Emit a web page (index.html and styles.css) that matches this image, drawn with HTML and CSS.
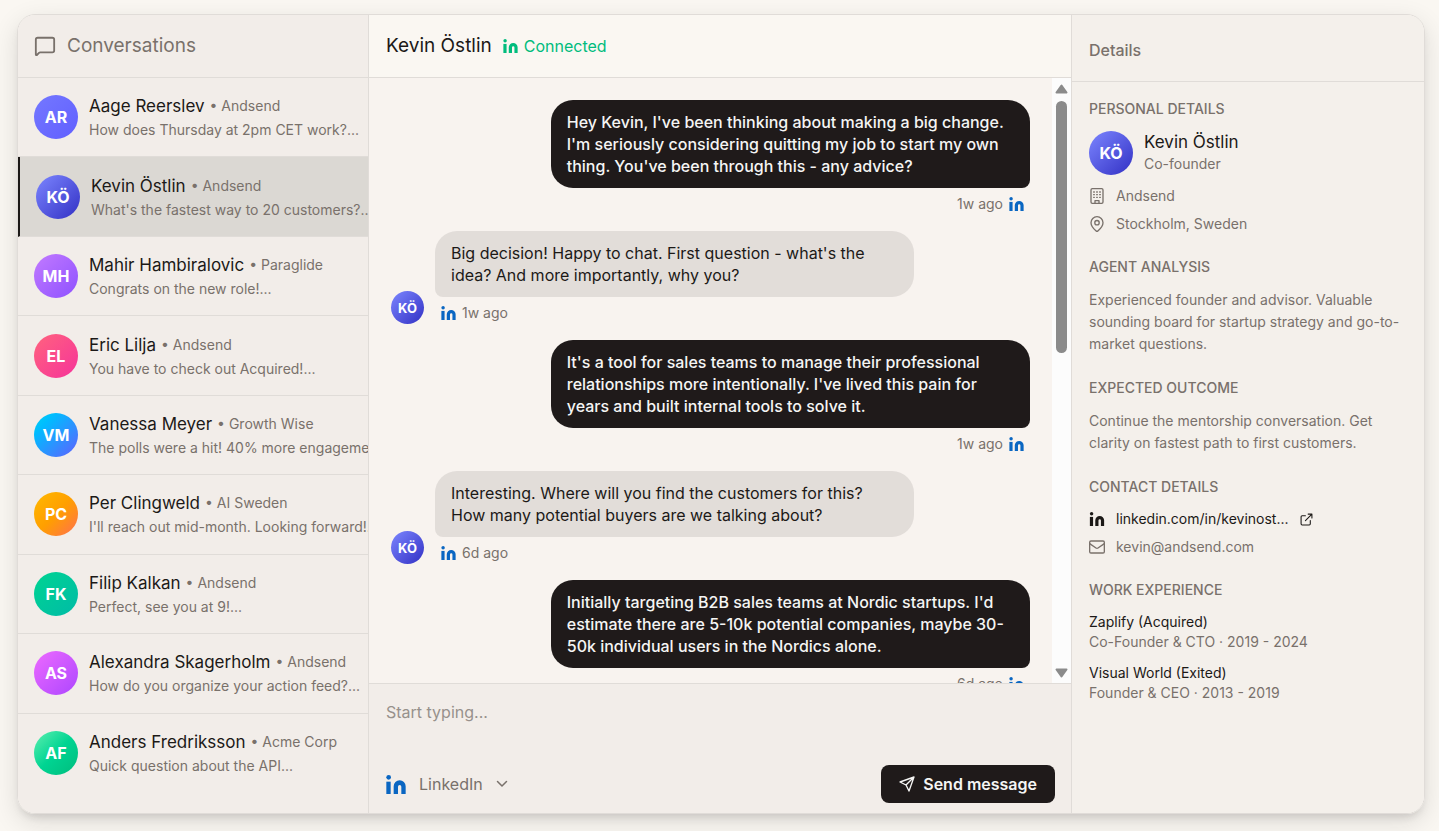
FILE: index.html
```html
<!DOCTYPE html>
<html lang="en">
<head>
    <meta charset="UTF-8">
    <meta name="viewport" content="width=device-width, initial-scale=1.0">
    <title>Conversations</title>
    <link rel="stylesheet" href="styles.css">
</head>
<body>
    <!-- Shared icons -->
    <svg class="sprite" aria-hidden="true">
        <symbol id="icon-linkedin" viewBox="0 0 60 57">
            <circle cx="8" cy="7" r="7"/>
            <rect x="1" y="20" width="13" height="37"/>
            <path d="M23 57V34a18 18 0 0 1 36 0v23H46V35a5 5 0 0 0-10 0v22z"/>
        </symbol>
    </svg>

    <div class="app">
        <nav class="sidebar" aria-label="Conversations">
            <header class="sidebar-header">
                <svg class="icon-chat" viewBox="0 0 24 24" aria-hidden="true"><path d="M22 17a2 2 0 0 1-2 2H6.8a2 2 0 0 0-1.4.6l-2.2 2.2A.7.7 0 0 1 2 21.3V5a2 2 0 0 1 2-2h16a2 2 0 0 1 2 2z"/></svg>
                <h2>Conversations</h2>
            </header>
            <div class="list">
                <a class="row" href="#aage">
                    <span class="avatar ar">AR</span>
                    <span class="row-text">
                        <span class="row-top"><span class="name">Aage Reerslev</span><span class="company">• Andsend</span></span>
                        <span class="preview">How does Thursday at 2pm CET work?...</span>
                    </span>
                </a>
                <a class="row active" href="#kevin">
                    <span class="avatar ko">KÖ</span>
                    <span class="row-text">
                        <span class="row-top"><span class="name">Kevin Östlin</span><span class="company">• Andsend</span></span>
                        <span class="preview">What's the fastest way to 20 customers?...</span>
                    </span>
                </a>
                <a class="row" href="#mahir">
                    <span class="avatar mh">MH</span>
                    <span class="row-text">
                        <span class="row-top"><span class="name">Mahir Hambiralovic</span><span class="company">• Paraglide</span></span>
                        <span class="preview">Congrats on the new role!...</span>
                    </span>
                </a>
                <a class="row" href="#eric">
                    <span class="avatar el">EL</span>
                    <span class="row-text">
                        <span class="row-top"><span class="name">Eric Lilja</span><span class="company">• Andsend</span></span>
                        <span class="preview">You have to check out Acquired!...</span>
                    </span>
                </a>
                <a class="row" href="#vanessa">
                    <span class="avatar vm">VM</span>
                    <span class="row-text">
                        <span class="row-top"><span class="name">Vanessa Meyer</span><span class="company">• Growth Wise</span></span>
                        <span class="preview">The polls were a hit! 40% more engagement...</span>
                    </span>
                </a>
                <a class="row" href="#per">
                    <span class="avatar pc">PC</span>
                    <span class="row-text">
                        <span class="row-top"><span class="name">Per Clingweld</span><span class="company">• AI Sweden</span></span>
                        <span class="preview">I'll reach out mid-month. Looking forward!...</span>
                    </span>
                </a>
                <a class="row" href="#filip">
                    <span class="avatar fk">FK</span>
                    <span class="row-text">
                        <span class="row-top"><span class="name">Filip Kalkan</span><span class="company">• Andsend</span></span>
                        <span class="preview">Perfect, see you at 9!...</span>
                    </span>
                </a>
                <a class="row" href="#alexandra">
                    <span class="avatar as">AS</span>
                    <span class="row-text">
                        <span class="row-top"><span class="name">Alexandra Skagerholm</span><span class="company">• Andsend</span></span>
                        <span class="preview">How do you organize your action feed?...</span>
                    </span>
                </a>
                <a class="row" href="#anders">
                    <span class="avatar af">AF</span>
                    <span class="row-text">
                        <span class="row-top"><span class="name">Anders Fredriksson</span><span class="company">• Acme Corp</span></span>
                        <span class="preview">Quick question about the API...</span>
                    </span>
                </a>
            </div>
        </nav>

        <main class="chat">
            <header class="chat-header">
                <h1>Kevin Östlin</h1>
                <span class="connected"><svg class="in-small" aria-hidden="true"><use href="#icon-linkedin"/></svg>Connected</span>
            </header>

            <div class="thread">
                <div class="messages">
                    <div class="message sent">
                        <div class="message-body">
                            <p class="bubble">Hey Kevin, I've been thinking about making a big change. I'm seriously considering quitting my job to start my own thing. You've been through this - any advice?</p>
                            <div class="meta">1w ago <svg class="in-small" aria-hidden="true"><use href="#icon-linkedin"/></svg></div>
                        </div>
                    </div>
                    <div class="message received">
                        <span class="avatar avatar-small ko">KÖ</span>
                        <div class="message-body">
                            <p class="bubble">Big decision! Happy to chat. First question - what's the idea? And more importantly, why you?</p>
                            <div class="meta"><svg class="in-small" aria-hidden="true"><use href="#icon-linkedin"/></svg> 1w ago</div>
                        </div>
                    </div>
                    <div class="message sent">
                        <div class="message-body">
                            <p class="bubble">It's a tool for sales teams to manage their professional relationships more intentionally. I've lived this pain for years and built internal tools to solve it.</p>
                            <div class="meta">1w ago <svg class="in-small" aria-hidden="true"><use href="#icon-linkedin"/></svg></div>
                        </div>
                    </div>
                    <div class="message received">
                        <span class="avatar avatar-small ko">KÖ</span>
                        <div class="message-body">
                            <p class="bubble">Interesting. Where will you find the customers for this? How many potential buyers are we talking about?</p>
                            <div class="meta"><svg class="in-small" aria-hidden="true"><use href="#icon-linkedin"/></svg> 6d ago</div>
                        </div>
                    </div>
                    <div class="message sent">
                        <div class="message-body">
                            <p class="bubble">Initially targeting B2B sales teams at Nordic startups. I'd estimate there are 5-10k potential companies, maybe 30-50k individual users in the Nordics alone.</p>
                            <div class="meta">6d ago <svg class="in-small" aria-hidden="true"><use href="#icon-linkedin"/></svg></div>
                        </div>
                    </div>
                </div>
                <div class="scrollbar" aria-hidden="true">
                    <svg class="arrow" viewBox="0 0 13 10"><path d="M6.5 1.5l5 7h-10z"/></svg>
                    <div class="track"><div class="thumb"></div></div>
                    <svg class="arrow" viewBox="0 0 13 10"><path d="M6.5 8.5l-5-7h10z"/></svg>
                </div>
            </div>

            <form class="composer">
                <textarea aria-label="Message" placeholder="Start typing..."></textarea>
                <div class="composer-bar">
                    <label class="channel">
                        <svg class="in-large" aria-hidden="true"><use href="#icon-linkedin"/></svg>
                        <select aria-label="Channel">
                            <option>LinkedIn</option>
                        </select>
                        <svg class="icon-chevron" viewBox="0 0 24 24" aria-hidden="true"><path d="m3 7 9 9 9-9"/></svg>
                    </label>
                    <button class="send" type="button">
                        <svg class="icon-send" viewBox="0 0 24 24" aria-hidden="true"><path d="M22.5 1.5L15 22.5l-4.5-9L1.5 9zM22.5 1.5l-12 12"/></svg>
                        Send message
                    </button>
                </div>
            </form>
        </main>

        <aside class="details">
            <header class="details-header">
                <h2>Details</h2>
            </header>
            <div class="details-body">
                <section>
                    <h3>PERSONAL DETAILS</h3>
                    <div class="person">
                        <span class="avatar ko">KÖ</span>
                        <div>
                            <div class="name">Kevin Östlin</div>
                            <div class="role">Co-founder</div>
                        </div>
                    </div>
                    <ul class="facts">
                        <li>
                            <svg class="icon-fact" viewBox="0 0 24 24" aria-hidden="true"><rect x="3" y="1" width="18" height="22" rx="2"/><path d="M9 23v-4h6v4M7 6h1M11.5 6h1M16 6h1M7 10h1M11.5 10h1M16 10h1M7 14h1M11.5 14h1M16 14h1"/></svg>
                            Andsend
                        </li>
                        <li>
                            <svg class="icon-fact" viewBox="0 0 24 24" aria-hidden="true"><path d="M21 10c0 5-5 10-7.7 12.4a2 2 0 0 1-2.6 0C8 20 3 15 3 10a9 9 0 0 1 18 0z"/><circle cx="12" cy="10" r="3.3"/></svg>
                            Stockholm, Sweden
                        </li>
                    </ul>
                </section>
                <section>
                    <h3>AGENT ANALYSIS</h3>
                    <p>Experienced founder and advisor. Valuable sounding board for startup strategy and go-to-market questions.</p>
                </section>
                <section>
                    <h3>EXPECTED OUTCOME</h3>
                    <p>Continue the mentorship conversation. Get clarity on fastest path to first customers.</p>
                </section>
                <section>
                    <h3>CONTACT DETAILS</h3>
                    <ul class="facts">
                        <li>
                            <a class="profile-link" href="#linkedin">
                                <svg class="in-fact" aria-hidden="true"><use href="#icon-linkedin"/></svg>
                                linkedin.com/in/kevinost...
                                <svg class="icon-external" viewBox="0 0 24 24" aria-hidden="true"><path d="M15 2h7v7M10 14 22 2M19 14v6a2 2 0 0 1-2 2H4a2 2 0 0 1-2-2V7a2 2 0 0 1 2-2h6"/></svg>
                            </a>
                        </li>
                        <li>
                            <svg class="icon-fact" viewBox="0 0 24 24" aria-hidden="true"><rect x="1" y="3" width="22" height="18" rx="2"/><path d="m1 7 9.5 6.5a2.7 2.7 0 0 0 3 0L23 7"/></svg>
                            kevin@andsend.com
                        </li>
                    </ul>
                </section>
                <section>
                    <h3>WORK EXPERIENCE</h3>
                    <div class="jobs">
                        <div>
                            <div class="job-name">Zaplify (Acquired)</div>
                            <div class="job-role">Co-Founder &amp; CTO · 2019 - 2024</div>
                        </div>
                        <div>
                            <div class="job-name">Visual World (Exited)</div>
                            <div class="job-role">Founder &amp; CEO · 2013 - 2019</div>
                        </div>
                    </div>
                </section>
            </div>
        </aside>
    </div>
</body>
</html>
```
FILE: styles.css
```css
* {
    box-sizing: border-box;
}
body {
    margin: 0;
    height: 100vh;
    padding: 14px 14px 17px 17px;
    background: #faf7f2;
    color: #1c1917;
    font-family: Inter, sans-serif;
    font-size: 16px;
    line-height: 22px;
}
h1, h2, h3, p, ul {
    margin: 0;
    padding: 0;
}
a {
    color: inherit;
    text-decoration: none;
}
svg {
    flex: none;
    fill: none;
    stroke: currentColor;
    stroke-linecap: round;
    stroke-linejoin: round;
}
.sprite {
    display: none;
}
.app {
    display: grid;
    grid-template-columns: 351px minmax(0, 1fr) 353px;
    height: 100%;
    border: 1px solid #e0dcd8;
    border-radius: 18px;
    overflow: hidden;
    box-shadow: 0 8px 26px rgba(28, 25, 23, 0.12), 0 6px 10px -4px rgba(28, 25, 23, 0.16);
}

/* Sidebar */
.sidebar {
    display: flex;
    flex-direction: column;
    min-width: 0;
    overflow: hidden;
    background: #f2ede9;
    border-right: 1px solid #e0dcd8;
}
.sidebar-header {
    display: flex;
    align-items: center;
    gap: 11px;
    height: 63px;
    padding: 0 16px;
    border-bottom: 1px solid #e0dcd8;
    color: #79716b;
}
.sidebar-header h2 {
    font-size: 19px;
    font-weight: 400;
    line-height: 24px;
}
.icon-chat {
    width: 22px;
    height: 22px;
    stroke-width: 2;
}
.list {
    flex: 1;
    display: flex;
    flex-direction: column;
    padding-bottom: 21px;
}
.row {
    flex: 1;
    display: flex;
    align-items: center;
    gap: 11px;
    padding: 0 16px;
    border-bottom: 1px solid #e0dcd8;
    white-space: nowrap;
}
.row:last-child {
    border-bottom: none;
}
.row.active {
    background: #dbd8d3;
    border-left: 2px solid #1c1917;
}
.row-text {
    display: flex;
    flex-direction: column;
    padding-top: 2px;
    line-height: 24px;
}
.row-top {
    display: flex;
    gap: 5px;
}
.name {
    font-size: 17px;
}
.company,
.preview {
    color: #79716b;
    font-size: 14px;
}
.avatar {
    flex: none;
    display: flex;
    align-items: center;
    justify-content: center;
    width: 44px;
    height: 44px;
    border-radius: 50%;
    color: #ffffff;
    font-size: 16px;
    font-weight: 700;
}
.avatar-small {
    width: 33px;
    height: 33px;
    font-size: 13px;
}
.ar { background: linear-gradient(135deg, #7478ff, #615fff); }
.ko { background: linear-gradient(135deg, #7c86ff, #3230c4); }
.mh { background: linear-gradient(135deg, #c27aff, #8e51ff); }
.el { background: linear-gradient(135deg, #ff637e, #f6339a); }
.vm { background: linear-gradient(135deg, #00d3f2, #00bcff 25%, #615fff); }
.pc { background: linear-gradient(135deg, #ffb900, #ff9f00 50%, #ff6f51); }
.fk { background: linear-gradient(135deg, #00d492, #00bba7); }
.as { background: linear-gradient(135deg, #ed6aff, #ad46ff); }
.af { background: linear-gradient(135deg, #5ef0b0, #00d492 50%, #00bc7d); }

/* Conversation */
.chat {
    display: flex;
    flex-direction: column;
    min-width: 0;
    min-height: 0;
    background: #f8f3ef;
}
.chat-header {
    display: flex;
    align-items: center;
    gap: 11px;
    height: 63px;
    flex: none;
    padding: 0 17px;
    background: #faf7f2;
    border-bottom: 1px solid #e0dcd8;
}
.chat-header h1 {
    font-size: 19px;
    font-weight: 400;
    line-height: 24px;
}
.connected {
    display: flex;
    align-items: center;
    gap: 6px;
    color: #00bc7d;
}
.in-small,
.in-large,
.in-fact {
    width: 15px;
    height: 14px;
    fill: currentColor;
    stroke: none;
}
.in-fact {
    width: 16px;
}
.in-large {
    width: 20px;
    height: 19px;
    color: #0a66c2;
}
.thread {
    flex: 1;
    display: flex;
    min-height: 0;
}
.messages {
    flex: 1;
    display: flex;
    flex-direction: column;
    gap: 16px;
    padding: 22px;
    overflow-y: auto;
    scrollbar-width: none;
}
.message {
    display: flex;
    align-items: flex-end;
    gap: 11px;
}
.sent {
    justify-content: flex-end;
}
.message-body {
    width: 75%;
}
.bubble {
    padding: 11px 16px;
    border-radius: 22px;
}
.sent .bubble {
    background: #1f1a1a;
    color: #f5f5f4;
    font-weight: 500;
    border-bottom-right-radius: 8px;
}
.received .bubble {
    background: #e2ddd9;
    border-bottom-left-radius: 8px;
}
.meta {
    display: flex;
    align-items: center;
    gap: 6px;
    margin-top: 5px;
    padding: 0 6px;
    color: #79716b;
    font-size: 14px;
}
.meta svg {
    color: #0a66c2;
}
.sent .meta {
    justify-content: flex-end;
}
.scrollbar {
    flex: none;
    display: flex;
    flex-direction: column;
    align-items: center;
    gap: 7px;
    width: 19px;
    padding: 6px 0 5px;
    background: #fcfcfc;
}
.arrow {
    width: 13px;
    height: 10px;
    fill: #8b8b8b;
    stroke: #8b8b8b;
    stroke-width: 2;
}
.track {
    flex: 1;
}
.thumb {
    width: 11px;
    height: 45%;
    border-radius: 6px;
    background: #8b8b8b;
}
.composer {
    flex: none;
    padding: 17px 16px 10px 17px;
    background: #f2ede9;
    border-top: 1px solid #e0dcd8;
}
.composer textarea {
    display: block;
    width: 100%;
    height: 64px;
    padding: 0;
    border: none;
    outline: none;
    resize: none;
    background: transparent;
    color: inherit;
    font: inherit;
}
.composer textarea::placeholder {
    color: #97918c;
}
.composer-bar {
    display: flex;
    align-items: center;
    justify-content: space-between;
}
.channel {
    display: flex;
    align-items: center;
    gap: 13px;
    color: #79716b;
}
.channel select {
    appearance: none;
    padding: 0;
    border: none;
    outline: none;
    background: transparent;
    color: inherit;
    font: inherit;
}
.icon-chevron {
    width: 12px;
    height: 12px;
    stroke-width: 3;
}
.send {
    display: flex;
    align-items: center;
    gap: 8px;
    height: 38px;
    padding: 0 18px;
    border: none;
    border-radius: 8px;
    background: #1f1a1a;
    color: #f5f5f4;
    font: inherit;
    font-weight: 600;
    cursor: pointer;
}
.icon-send {
    width: 16px;
    height: 16px;
    stroke-width: 2;
}

/* Details */
.details {
    min-width: 0;
    background: #f4f0eb;
    border-left: 1px solid #e0dcd8;
    color: #79716b;
    font-size: 14px;
}
.details-header {
    display: flex;
    align-items: center;
    height: 67px;
    padding: 4px 17px 0;
    border-bottom: 1px solid #e0dcd8;
}
.details-header h2 {
    font-size: 16px;
    font-weight: 500;
}
.details-body {
    display: flex;
    flex-direction: column;
    gap: 22px;
    padding: 16px 17px;
}
.details-body h3 {
    margin-bottom: 11px;
    font-size: 14px;
    font-weight: 500;
}
.person {
    display: flex;
    align-items: center;
    gap: 11px;
    margin-bottom: 11px;
}
.details .name,
.job-name,
.profile-link {
    color: #1c1917;
}
.facts {
    display: flex;
    flex-direction: column;
    gap: 8px;
    list-style: none;
    line-height: 20px;
}
.facts li,
.profile-link {
    display: flex;
    align-items: center;
    gap: 11px;
}
.icon-fact {
    width: 16px;
    height: 16px;
    stroke-width: 2;
}
.icon-external {
    width: 13px;
    height: 13px;
    stroke-width: 2;
}
.jobs {
    display: flex;
    flex-direction: column;
    gap: 11px;
    line-height: 20px;
}
```
